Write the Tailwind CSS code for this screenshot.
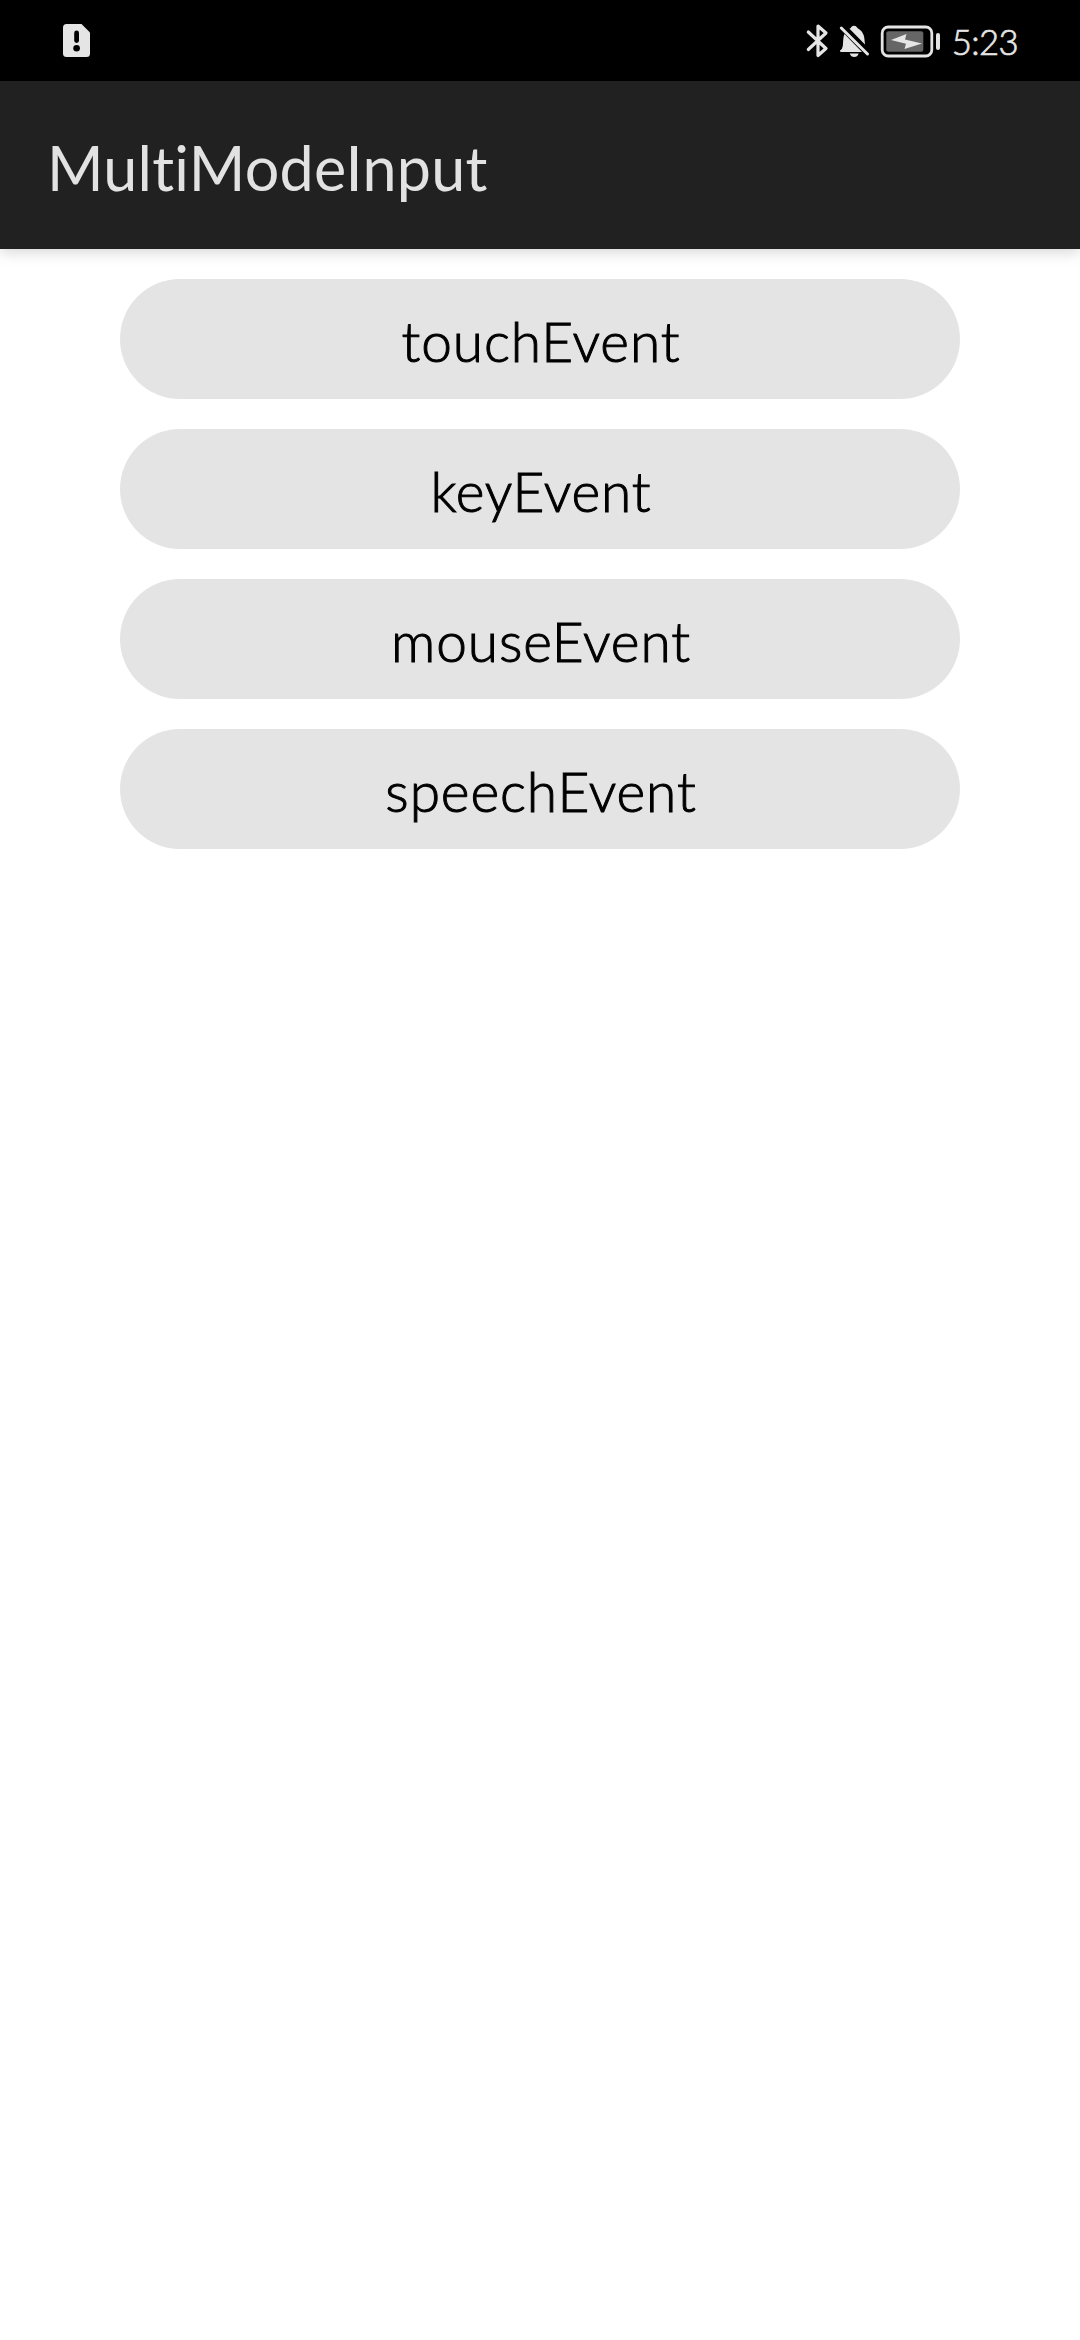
<!DOCTYPE html>
<html lang="en">
<head>
<meta charset="utf-8">
<title>MultiModeInput</title>
<script src="https://cdn.jsdelivr.net/npm/@tailwindcss/browser@4"></script>
</head>
<body class="flex h-[2340px] w-[1080px] flex-col bg-white font-['Lato',sans-serif]">
  <!-- Status bar -->
  <div class="flex h-[81px] shrink-0 items-center justify-between bg-black pr-[62px] pl-[63px] text-[#e5e5e5]">
    <svg class="h-[33px] w-[27px]" viewBox="63 24 27 33">
      <path fill="currentColor" d="M66.500 24H81.500L90 32.500V53.500Q90 57 86.500 57H66.500Q63 57 63 53.500V27.500Q63 24 66.500 24Z"/>
      <rect x="74.200" y="30.500" width="4.800" height="12.500" rx="2.400" fill="#000"/>
      <circle cx="76.600" cy="48.300" r="3.300" fill="#000"/>
    </svg>
    <div class="flex items-center">
      <svg class="h-[40px] w-[140px]" viewBox="802 20 140 40" fill="none">
        <path stroke="currentColor" stroke-width="3.200" stroke-linecap="round" stroke-linejoin="round" d="M808.300 31L826 47.500L818 54.500V25L826 32L808.300 48.500"/>
        <path fill="currentColor" d="M840 49.500Q842.500 48 842.800 45L843.300 38Q843.500 35 844.500 33L862 51H841Q840 51 840 49.500ZM849.500 27.700Q851 27 851.300 26Q854 23.500 857 26.200Q857.500 27.300 858.500 27.700Q863.500 30.500 864.300 37L865 43.500ZM849.700 52.500H858.700Q857.500 56 854.200 56Q851 56 849.700 52.500Z"/>
        <path stroke="currentColor" stroke-width="3" stroke-linecap="round" d="M841.300 27L867.500 53"/>
        <rect x="882.200" y="26" width="49.600" height="29" rx="6" stroke="currentColor" stroke-width="2.800"/>
        <rect x="886.300" y="30.300" width="37" height="20.400" rx="2" fill="#666"/>
        <path fill="currentColor" d="M891 39L906.500 33L905 38.500L922 42.500L904.500 48L906 42.700Z"/>
        <rect x="936" y="32" width="4" height="17" rx="2" fill="currentColor"/>
      </svg>
      <span class="mt-0.5 ml-[10px] text-[34.7px] leading-10 font-light tracking-[-0.6px] [-webkit-text-stroke:0.7px]">5:23</span>
    </div>
  </div>
  <!-- App bar -->
  <header class="relative flex h-[168px] shrink-0 items-center bg-[#212121] pt-[5px] pl-[47px] shadow-[0_3px_14px_rgba(0,0,0,0.17)]">
    <h1 class="text-[61px] leading-none tracking-[0.25px] text-[#e2e2e2]">MultiModeInput</h1>
  </header>
  <main class="flex flex-col items-center gap-[30px] pt-[30px] text-[55px] leading-none font-light tracking-[0.9px] text-black [-webkit-text-stroke:1px]">
    <button class="h-[120px] w-[840px] rounded-full bg-[#e4e4e4] pt-1 pl-0.5">touchEvent</button>
    <button class="h-[120px] w-[840px] rounded-full bg-[#e4e4e4] pt-1 pl-0.5">keyEvent</button>
    <button class="h-[120px] w-[840px] rounded-full bg-[#e4e4e4] pt-1 pl-0.5">mouseEvent</button>
    <button class="h-[120px] w-[840px] rounded-full bg-[#e4e4e4] pt-1 pl-0.5">speechEvent</button>
  </main>
</body>
</html>
